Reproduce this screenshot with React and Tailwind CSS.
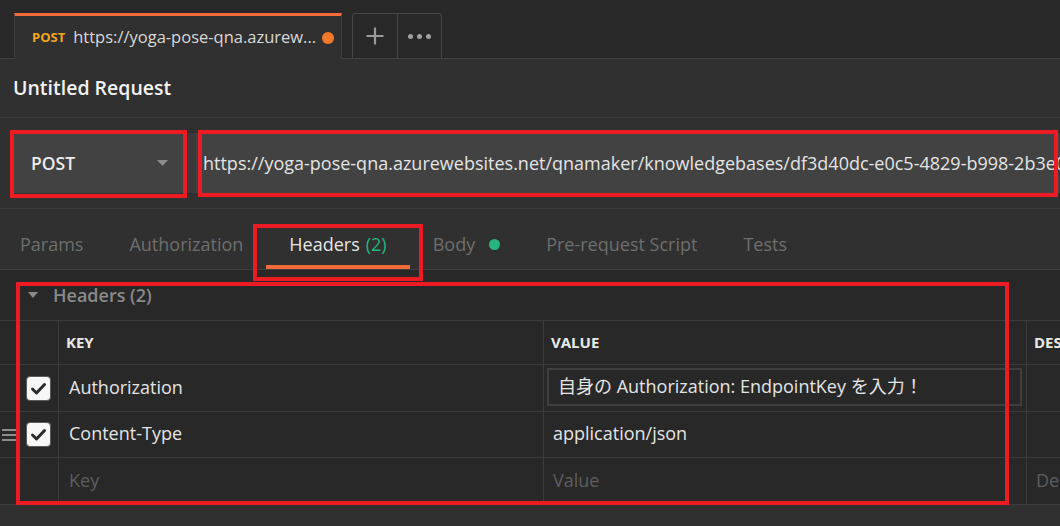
export default function App() {
  const Check = () => (
    <div className="w-[25px] h-[25px] rounded-[4px] bg-[#f7f7f7] border border-[#5a5a5a] flex items-center justify-center">
      <svg width="19" height="19" viewBox="0 0 19 19">
        <path d="M3.5 10 L7.5 14 L15.5 5.5" fill="none" stroke="#2b2b2b" strokeWidth="3" strokeLinecap="round" strokeLinejoin="round" />
      </svg>
    </div>
  );
  const Handle = ({ show }) => (
    <div className={"w-[14px] flex flex-col gap-[3px] " + (show ? "" : "invisible")}>
      <div className="h-[2px] bg-[#8c8c8c]" />
      <div className="h-[2px] bg-[#8c8c8c]" />
      <div className="h-[2px] bg-[#8c8c8c]" />
    </div>
  );
  return (
    <div className="relative w-[1060px] h-[526px] overflow-hidden bg-[#303030] font-['Open_Sans',sans-serif] text-[#e0e0e0]">
      {/* request tabs */}
      <div className="h-[59px] bg-[#282828] border-b border-[#414141] flex items-end pl-[14px]">
        <div className="w-[328px] h-[46px] -mb-px bg-[#303030] border-t-[3px] border-t-[#f26b3a] border-x border-x-[#3e3e3e] flex items-center pl-[17px] pr-[7px]">
          <span className="text-[13px] font-bold text-[#f4a51c] leading-none">POST</span>
          <span className="ml-[8px] text-[16.5px] text-[#d8d8d8] whitespace-nowrap flex-1 overflow-hidden">https://yoga-pose-qna.azurew...</span>
          <span className="w-[12px] h-[12px] rounded-full bg-[#f37a2b] shrink-0" />
        </div>
        <div className="ml-[10px] h-[45px] flex border border-b-0 border-[#474747] rounded-t-[4px]">
          <div className="w-[45px] flex items-center justify-center border-r border-[#474747]">
            <svg width="20" height="20" viewBox="0 0 20 20">
              <path d="M10 1.5 V18.5 M1.5 10 H18.5" stroke="#9a9a9a" strokeWidth="2.2" />
            </svg>
          </div>
          <div className="w-[43px] flex items-center justify-center gap-[4px]">
            <span className="w-[5px] h-[5px] rounded-full bg-[#a0a0a0]" />
            <span className="w-[5px] h-[5px] rounded-full bg-[#a0a0a0]" />
            <span className="w-[5px] h-[5px] rounded-full bg-[#a0a0a0]" />
          </div>
        </div>
      </div>

      {/* title */}
      <div className="h-[59px] border-b border-[#3a3a3a] flex items-center px-[13px]">
        <span className="text-[19.5px] font-semibold text-[#f2f2f2]">Untitled Request</span>
      </div>

      {/* url row */}
      <div className="py-[15px] border-b border-[#3a3a3a] flex pl-[14px]">
        <div className="w-[172px] h-[60px] bg-[#424242] flex items-center justify-between pl-[17px] pr-[18px]">
          <span className="text-[17.5px] font-semibold text-[#ececec]">POST</span>
          <svg width="11" height="6" viewBox="0 0 11 6">
            <path d="M0 0 H11 L5.5 6 Z" fill="#8c8c8c" />
          </svg>
        </div>
        <div className="w-[10px] h-[60px] bg-[#3a3a3a]" />
        <div className="flex-1 h-[60px] bg-[#424242] flex items-center pl-[7px] overflow-hidden">
          <span className="text-[18px] text-[#e4e4e4] whitespace-nowrap">https://yoga-pose-qna.azurewebsites.net/qnamaker/knowledgebases/df3d40dc-e0c5-4829-b998-2b3e0a1c7f21/generateAnswer</span>
        </div>
      </div>

      {/* request sub tabs */}
      <div className="h-[61px] border-b border-[#3d3d3d] flex ml-[-3px] text-[18px] text-[#6e6e6e]">
        <div className="h-full flex items-center pt-[10px] px-[23px]">Params</div>
        <div className="h-full flex items-center pt-[10px] px-[23px]">Authorization</div>
        <div className="h-full flex items-center pt-[14px] px-[23px] border-b-4 border-[#f26b3a]">
          <span className="text-[#e6e6e6]">Headers</span>
          <span className="ml-[6px] text-[#26b47f]">(2)</span>
        </div>
        <div className="h-full flex items-center pt-[10px] px-[23px]">
          <span>Body</span>
          <span className="ml-[14px] w-[11px] h-[11px] rounded-full bg-[#26b47f]" />
        </div>
        <div className="h-full flex items-center pt-[10px] px-[23px]">Pre-request Script</div>
        <div className="h-full flex items-center pt-[10px] px-[23px]">Tests</div>
      </div>

      {/* headers section */}
      <div className="bg-[#282828]">
        <div className="h-[50px] flex items-center pl-[28px]">
          <svg width="10" height="6" viewBox="0 0 10 6">
            <path d="M0 0 H10 L5 6 Z" fill="#8a8a8a" />
          </svg>
          <span className="ml-[15px] text-[18px] font-semibold text-[#8a8a8a]">Headers (2)</span>
        </div>
        <div className="grid grid-cols-[59px_485px_483px_1fr] border-t border-[#3c3c3c] text-[18px]">
          {/* header */}
          <div className="h-[44px] border-r border-b border-[#3c3c3c]" />
          <div className="h-[44px] border-r border-b border-[#3c3c3c] flex items-center pl-[7px] text-[15px] font-bold text-[#e8e8e8]">KEY</div>
          <div className="h-[44px] border-r border-b border-[#3c3c3c] flex items-center pl-[7px] text-[15px] font-bold text-[#e8e8e8]">VALUE</div>
          <div className="h-[44px] border-b border-[#3c3c3c] flex items-center pl-[7px] text-[15px] font-bold text-[#e8e8e8] whitespace-nowrap overflow-hidden">DESCRIPTION</div>
          {/* row 1 */}
          <div className="h-[47px] border-r border-b border-[#3c3c3c] flex items-center pl-[2px]">
            <Handle show={false} />
            <div className="ml-[10px]"><Check /></div>
          </div>
          <div className="h-[47px] border-r border-b border-[#3c3c3c] flex items-center pl-[10px] pb-[2px] text-[#e4e4e4]">Authorization</div>
          <div className="h-[47px] border-r border-b border-[#3c3c3c] pl-[3px] pr-[4px] pt-[3px]">
            <div className="h-[38px] border-2 border-[#3e3e3e] flex items-center pl-[9px] pb-[1px] text-[#e4e4e4] whitespace-nowrap font-['Open_Sans','Noto_Sans_CJK_JP',sans-serif]">自身の Authorization: EndpointKey を入力！</div>
          </div>
          <div className="h-[47px] border-b border-[#3c3c3c]" />
          {/* row 2 */}
          <div className="h-[46px] border-r border-b border-[#3c3c3c] flex items-center pl-[2px]">
            <Handle show={true} />
            <div className="ml-[10px]"><Check /></div>
          </div>
          <div className="h-[46px] border-r border-b border-[#3c3c3c] flex items-center pl-[10px] pb-[2px] text-[#e4e4e4]">Content-Type</div>
          <div className="h-[46px] border-r border-b border-[#3c3c3c] flex items-center pl-[9px] pb-[2px] text-[#e4e4e4]">application/json</div>
          <div className="h-[46px] border-b border-[#3c3c3c]" />
          {/* row 3 */}
          <div className="h-[47px] border-r border-b border-[#3c3c3c]" />
          <div className="h-[47px] border-r border-b border-[#3c3c3c] flex items-center pl-[10px] pb-[2px] text-[#5e5e5e]">Key</div>
          <div className="h-[47px] border-r border-b border-[#3c3c3c] flex items-center pl-[9px] pb-[2px] text-[#5e5e5e]">Value</div>
          <div className="h-[47px] border-b border-[#3c3c3c] flex items-center pl-[9px] pb-[2px] text-[#5e5e5e] whitespace-nowrap overflow-hidden">Description</div>
        </div>
      </div>

      {/* red annotation boxes */}
      <div className="absolute left-[10px] top-[130px] w-[177px] h-[68px] border-4 border-[#ed1c24]" />
      <div className="absolute left-[198px] top-[130px] w-[860px] h-[67px] border-4 border-[#ed1c24]" />
      <div className="absolute left-[253px] top-[224px] w-[170px] h-[57px] border-4 border-[#ed1c24]" />
      <div className="absolute left-[16px] top-[282px] w-[993px] h-[223px] border-4 border-[#ed1c24]" />
    </div>
  );
}
